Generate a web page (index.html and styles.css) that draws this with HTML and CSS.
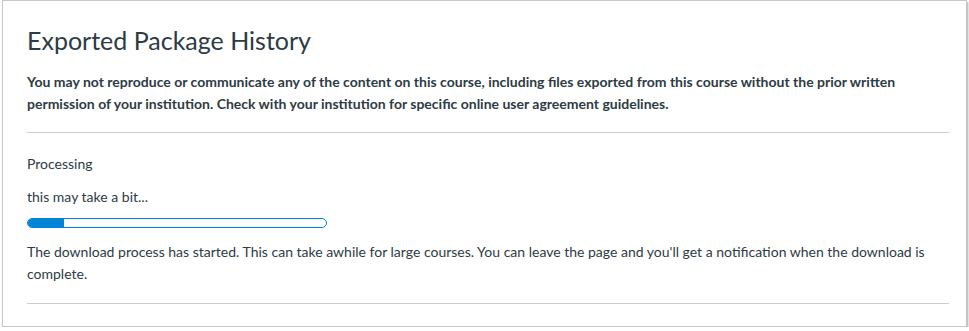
FILE: index.html
```html
<!DOCTYPE html>
<html lang="en">
  <head>
    <meta charset="UTF-8" />
    <meta name="viewport" content="width=device-width, initial-scale=1.0" />
    <title>Exported Package History</title>
    <link rel="stylesheet" href="styles.css">
  </head>
  <body>
    <div class="frame">
      <h1>Exported Package History</h1>
      <p class="notice">
        You may not reproduce or communicate any of the content on this course, including files exported from this course without the prior written permission of your institution. Check with your institution for specific online user agreement guidelines.
      </p>
      <hr />
      <div class="status">
        <p class="status-title">Processing</p>
        <p class="status-note">this may take a bit...</p>
        <div class="progress">
          <div class="progress-fill" style="width: 12%"></div>
        </div>
        <p class="status-info">
          The download process has started. This can take awhile for large courses. You can leave the page and you'll get a notification when the download is complete.
        </p>
      </div>
      <hr />
    </div>
  </body>
</html>
```

FILE: styles.css
```css
body {
  font-family: Lato, "Open Sans", sans-serif;
  margin: 0;
  background-color: #ffffff;
  color: #2d3b45;
}

.frame {
  width: 922px;
  height: 302px;
  margin-left: 2px;
  padding: 23px 17px 0 24px;
  border: 1px solid #c4c8cb;
  box-shadow: 1px 2px 2px rgba(0, 0, 0, 0.35);
}

h1 {
  font-size: 25px;
  font-weight: 400;
  margin: 0 0 15px 0;
  line-height: 32px;
}

.notice {
  font-size: 14px;
  font-weight: bold;
  line-height: 22px;
  margin: 0 0 17px 0;
}

hr {
  border: none;
  border-top: 1px solid #c7cdd1;
  margin: 0;
}

.status {
  padding: 20px 0 18px 0;
}

.status p {
  font-size: 14px;
  margin: 0;
  line-height: 22px;
}

.status-note {
  margin-top: 11px !important;
}

.progress {
  width: 298px;
  height: 8px;
  margin-top: 10px;
  border: 1px solid #0084d6;
  border-radius: 5px;
  overflow: hidden;
}

.progress-fill {
  height: 100%;
  background-color: #0084d6;
}

.status-info {
  margin-top: 13px !important;
}
```
